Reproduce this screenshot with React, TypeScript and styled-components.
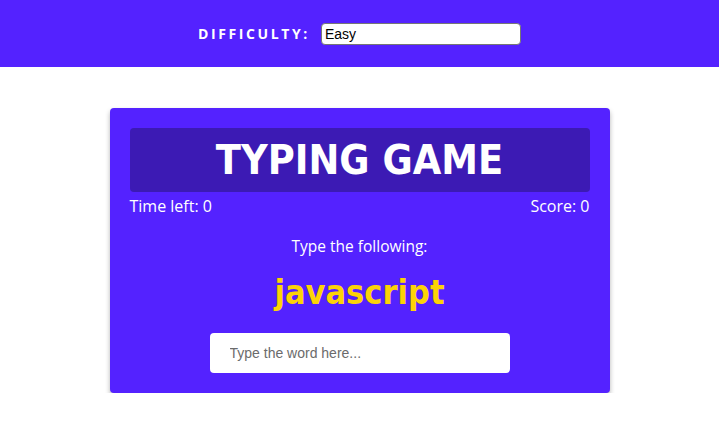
import React from "react"
import styled, { createGlobalStyle } from "styled-components"

const GlobalStyle = createGlobalStyle`
    * { box-sizing: border-box; }
    body {
        margin: 0;
        background: #ffffff;
        font-family: "Open Sans", "Liberation Sans", sans-serif;
    }
`

export default function App() {
    return (
        <>
            <GlobalStyle />
            <Page>
                <Settings>
                    <Label htmlFor="difficulty">Difficulty:</Label>
                    <Select id="difficulty" defaultValue="easy">
                        <option value="easy">Easy</option>
                        <option value="medium">Medium</option>
                        <option value="hard">Hard</option>
                    </Select>
                </Settings>
                <Card>
                    <Title>Typing Game</Title>
                    <Stats>
                        <span>Time left: 0</span>
                        <span>Score: 0</span>
                    </Stats>
                    <Prompt>Type the following:</Prompt>
                    <Word>javascript</Word>
                    <WordInput placeholder="Type the word here..." />
                </Card>
            </Page>
        </>
    )
}

const Page = styled.div`
    display: flex;
    flex-direction: column;
    align-items: center;
`

const Settings = styled.div`
    width: 100%;
    height: 67px;
    background: #5422ff;
    display: flex;
    align-items: center;
    justify-content: center;
    gap: 11px;
`

const Label = styled.label`
    color: #ffffff;
    font-weight: 700;
    font-size: 14px;
    letter-spacing: 2.6px;
    text-transform: uppercase;
`

const Select = styled.select`
    appearance: none;
    width: 200px;
    height: 22px;
    border: 1px solid #767676;
    border-radius: 4px;
    background: #ffffff;
    font-family: "Liberation Sans", Arial, sans-serif;
    font-size: 14px;
    color: #000000;
    padding: 0 3px;
`

const Card = styled.div`
    width: 500px;
    margin-top: 41px;
    background: #5422ff;
    border-radius: 4px;
    box-shadow: 0 3px 5px rgba(0, 0, 0, 0.3);
    padding: 20px;
    color: #ffffff;
    display: flex;
    flex-direction: column;
    align-items: center;
`

const Title = styled.h1`
    margin: 0;
    width: 100%;
    height: 64px;
    background: #3c1ab4;
    border-radius: 4px;
    display: flex;
    align-items: center;
    justify-content: center;
    font-family: "DejaVu Sans Condensed", "DejaVu Sans", sans-serif;
    font-stretch: condensed;
    font-weight: 700;
    font-size: 41px;
    text-transform: uppercase;
`

const Stats = styled.div`
    width: 100%;
    display: flex;
    justify-content: space-between;
    font-size: 16px;
    line-height: 28px;
`

const Prompt = styled.p`
    margin: 16px 0 0;
    font-size: 15.5px;
    line-height: 20px;
`

const Word = styled.h2`
    margin: 12px 0 0;
    color: #fcd307;
    font-family: "DejaVu Sans Condensed", "DejaVu Sans", sans-serif;
    font-stretch: condensed;
    font-weight: 700;
    font-size: 34px;
    line-height: 48px;
`

const WordInput = styled.input`
    margin-top: 17px;
    width: 300px;
    height: 40px;
    border: none;
    border-radius: 4px;
    padding: 0 20px;
    font-family: "Liberation Sans", Arial, sans-serif;
    font-size: 14px;
    outline: none;

    &::placeholder {
        color: #6b6b6b;
    }
`
